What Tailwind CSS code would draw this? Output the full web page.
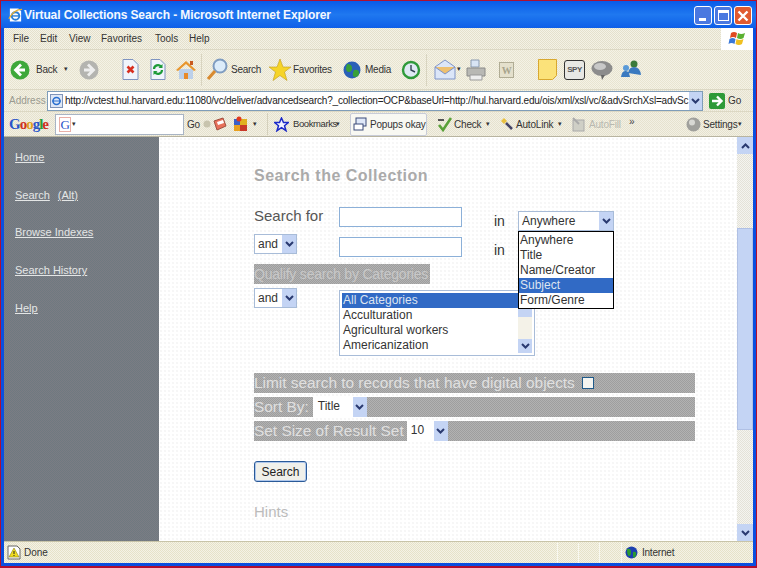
<!DOCTYPE html>
<html lang="en">
<head>
<meta charset="utf-8">
<title>Virtual Collections Search</title>
<script src="https://cdn.jsdelivr.net/npm/@tailwindcss/browser@4"></script>
</head>
<body class="w-[757px] h-[568px] overflow-hidden bg-white font-['Liberation_Sans',sans-serif]">
<div class="w-[757px] h-[568px] border border-[#b01030] border-b-2 bg-[#0a4fe0] flex flex-col">
  <!-- title bar -->
  <div class="h-[27px] flex items-center pl-[7px] pr-[4px] bg-gradient-to-b from-[#0a5ae8] via-[#1f78f0] to-[#0f5fe8]">
    <svg width="15" height="16" viewBox="0 0 16 16" class="shrink-0"><path d="M2 1h9l3 3v11H2z" fill="#fff"/><circle cx="8" cy="9" r="4" fill="none" stroke="#2a7fd8" stroke-width="2"/><path d="M3 9h10" stroke="#2a7fd8" stroke-width="1.5"/><path d="M1 12C5 4 11 2 15 2" stroke="#e8b030" stroke-width="1.5" fill="none"/></svg>
    <span class="text-[#f4f8ff] ml-[1px] font-bold text-[12px] tracking-[-0.1px] whitespace-nowrap">Virtual Collections Search - Microsoft Internet Explorer</span>
    <div class="ml-auto flex gap-[2px] mt-[2px]">
      <div class="w-[18px] h-[19px] rounded-[3px] border border-white bg-[#4a78e0] flex items-end pl-[4px] pb-[3px]"><div class="w-[7px] h-[3px] bg-white"></div></div>
      <div class="w-[18px] h-[19px] rounded-[3px] border border-white bg-[#4a78e0] flex items-center justify-center"><div class="w-[11px] h-[11px] border border-white border-t-[3px]"></div></div>
      <div class="w-[18px] h-[19px] rounded-[3px] border border-white bg-[#e05a30] flex items-center justify-center"><svg width="12" height="12" viewBox="0 0 12 12"><path d="M1.5 1.5l9 9M10.5 1.5l-9 9" stroke="#fff" stroke-width="2.4"/></svg></div>
    </div>
  </div>
  <!-- window body -->
  <div class="flex-1 min-h-0 mx-[3px] mb-[3px] flex flex-col text-[#333] bg-[#ece9d8]">
    <!-- menu -->
    <div class="h-[22px] flex items-center text-[10px] relative border-b border-[#dcd8c4] bg-[repeating-conic-gradient(#f4f2e6_0_25%,#e4e0cc_0_50%)] bg-[length:2px_2px]">
      <span class="ml-[9px] w-[27px]">File</span><span class="w-[29px]">Edit</span><span class="w-[32px]">View</span><span class="w-[54px]">Favorites</span><span class="w-[34px]">Tools</span><span>Help</span>
      <div class="ml-auto w-[32px] h-[22px] bg-white flex items-center justify-center">
        <svg width="18" height="17" viewBox="0 0 18 17"><path d="M3 3q3-2 6 0l-1 5q-3-2-6 0z" fill="#e04a20"/><path d="M10 3q3 2 7 0l-1.500 5q-3 2-6.500 0z" fill="#5ab030"/><path d="M1.500 9q3-2 6 0l-1 5q-3-2-6 0z" fill="#3a78d8"/><path d="M8.500 9q3 2 7 0l-1.500 5q-3 2-6.500 0z" fill="#f0c020"/></svg>
      </div>
    </div>
    <!-- standard toolbar -->
    <div class="h-[40px] flex items-center text-[10px] tracking-[-0.25px] border-b border-[#dcd8c4] bg-[repeating-conic-gradient(#f4f2e6_0_25%,#e8e4d0_0_50%)] bg-[length:2px_2px]">
      <svg class="ml-[6px] shrink-0" width="20" height="20" viewBox="0 0 20 20"><circle cx="10" cy="10" r="9.500" fill="#3ea83a"/><path d="M11 4.500L5.500 10l5.500 5.500M6 10h9" stroke="#fff" stroke-width="2.800" fill="none"/></svg>
      <span class="ml-[6px] w-[18px]">Back</span>
      <span class="ml-[10px] w-[6px] text-[7px]">▾</span>
      <svg class="ml-[9px] shrink-0" width="20" height="20" viewBox="0 0 20 20"><circle cx="10" cy="10" r="9.500" fill="#b4b4b0"/><path d="M9 4.500L14.500 10 9 15.500M14 10H5" stroke="#eee" stroke-width="2.800" fill="none"/></svg>
      <svg class="ml-[23px] shrink-0" width="17" height="21" viewBox="0 0 17 21"><path d="M1 .5h10l5 5v15H1z" fill="#f0f4fb" stroke="#7f94c0"/><path d="M5.500 7.500l6 6M11.500 7.500l-6 6" stroke="#d83020" stroke-width="2.600"/></svg>
      <svg class="ml-[11px] shrink-0" width="16" height="21" viewBox="0 0 16 21"><path d="M1 .5h9l5 5v15H1z" fill="#f0f4fb" stroke="#7f94c0"/><path d="M4 10a4 4 0 0 1 7-2.500M12 11a4 4 0 0 1-7 2.500" stroke="#1c9a38" stroke-width="2.200" fill="none"/><path d="M12.500 5v4h-4zM3.500 16v-4h4z" fill="#1c9a38"/></svg>
      <svg class="ml-[10px] shrink-0" width="20" height="20" viewBox="0 0 20 20"><path d="M3 9v10h14V9z" fill="#bcd0ea"/><path d="M8 13h4v6H8z" fill="#e88a2a"/><path d="M0 10L10 1l10 9-2 1-8-7-8 7z" fill="#e8962e"/><rect x="14" y="1" width="3" height="4" fill="#c85a20"/></svg>
      <div class="ml-[5px] w-px h-[32px] bg-[#d8d4c0]"></div>
      <svg class="ml-[4px] shrink-0" width="22" height="23" viewBox="0 0 22 23"><circle cx="14" cy="8" r="6.500" fill="#dcecfa" stroke="#7f9cc0" stroke-width="2"/><path d="M9 13L2 21" stroke="#d88a30" stroke-width="3.200"/></svg>
      <span class="ml-[3px] w-[28px]">Search</span>
      <svg class="ml-[10px] shrink-0" width="22" height="22" viewBox="0 0 22 22"><path d="M11 0l3 8h8l-6.500 5 2.500 8.500-7-5-7 5L6.500 13 0 8h8z" fill="#f6d428" stroke="#c09a20" stroke-width=".6"/></svg>
      <span class="ml-[2px] w-[38px]">Favorites</span>
      <svg class="ml-[12px] shrink-0" width="18" height="20" viewBox="0 0 18 20"><circle cx="9" cy="10" r="8.500" fill="#2a60b8"/><path d="M4 4q5 0 5 4t-3 4-3-4zM11 10q5-1 5 3t-4 4-1-7z" fill="#38a038"/></svg>
      <span class="ml-[4px] w-[24px]">Media</span>
      <svg class="ml-[12px] shrink-0" width="20" height="20" viewBox="0 0 20 20"><circle cx="10" cy="10" r="8" fill="#dfe9f4" stroke="#2f9a3a" stroke-width="2.400"/><path d="M10 5v5l4 2" stroke="#345" stroke-width="1.400" fill="none"/></svg>
      <div class="ml-[5px] w-px h-[32px] bg-[#d8d4c0]"></div>
      <svg class="ml-[7px] shrink-0" width="22" height="21" viewBox="0 0 22 21"><path d="M1 8l10-7 10 7v12H1z" fill="#dce6f8" stroke="#7f94c8"/><path d="M1 8l10 7 10-7" fill="#eec070" stroke="#7f94c8"/></svg>
      <span class="ml-[1px] w-[8px] text-[7px]">▾</span>
      <svg class="ml-[1px] shrink-0" width="20" height="22" viewBox="0 0 20 22"><path d="M5 1h8v7H5z" fill="#d8e4f4" stroke="#8a9ab0"/><path d="M1 9h18v8H1z" fill="#b8b8b4" stroke="#8a8a88"/><path d="M4 16h12v5H4z" fill="#eee" stroke="#999"/></svg>
      <svg class="ml-[13px] shrink-0" width="15" height="16" viewBox="0 0 15 16"><rect x=".5" y=".5" width="14" height="15" fill="#e4e0cc" stroke="#b0ac94"/><text x="7.500" y="12" font-size="10" font-weight="700" text-anchor="middle" fill="#a8a48c" font-family="Liberation Serif">W</text></svg>
      <svg class="ml-[24px] shrink-0" width="19" height="21" viewBox="0 0 19 21"><path d="M.5.500h18v16l-4 4H.5z" fill="#fbe27a" stroke="#d8a830"/></svg>
      <div class="ml-[7px] w-[21px] h-[20px] border border-[#333] bg-[#e8e8e4] rounded-[3px] flex items-center justify-center text-[8px] text-[#555] font-bold tracking-[-0.5px]">SPY</div>
      <svg class="ml-[6px] shrink-0" width="22" height="20" viewBox="0 0 22 20"><ellipse cx="11" cy="8.500" rx="10.500" ry="7.500" fill="#8c8c8c"/><ellipse cx="9" cy="6.500" rx="6" ry="3.500" fill="#c8c8c8"/><path d="M10 15l1 5 3-5z" fill="#666"/></svg>
      <svg class="ml-[8px] shrink-0" width="20" height="21" viewBox="0 0 20 21"><circle cx="5" cy="9" r="3" fill="#5a9ad8"/><circle cx="13" cy="5" r="3.500" fill="#3a7a3a"/><path d="M0 18q1-7 5-6 3 0 4 6zM7 14q1-6 6-6 6 0 7 8z" fill="#3a7ac0"/></svg>
    </div>
    <!-- address bar -->
    <div class="h-[22px] flex items-center text-[10px] border-b border-[#dcd8c4] bg-[repeating-conic-gradient(#f2f0e4_0_25%,#e6e2ce_0_50%)] bg-[length:2px_2px]">
      <span class="ml-[5px] w-[38px] text-[#9a9a90]">Address</span>
      <div class="w-[656px] h-[20px] border border-[#7f9db9] bg-white flex items-center overflow-hidden relative">
        <svg class="ml-[2px] shrink-0" width="13" height="14" viewBox="0 0 13 14"><rect x=".5" y=".5" width="12" height="13" fill="#dfe8f6" stroke="#7f94b8"/><circle cx="6.500" cy="7" r="3.500" fill="none" stroke="#2a70d0" stroke-width="1.600"/><path d="M2 7h9" stroke="#2a70d0"/></svg>
        <span class="ml-[2px] text-[#222] whitespace-nowrap tracking-[-0.2px]">http://vctest.hul.harvard.edu:11080/vc/deliver/advancedsearch?_collection=OCP&amp;baseUrl=http://hul.harvard.edu/ois/xml/xsl/vc/&amp;advSrchXsl=advSc</span>
        <div class="absolute right-0 top-0 bottom-0 w-[13px] bg-[#c4d4f4] flex items-center justify-center"><svg width="9" height="6" viewBox="0 0 9 6"><path d="M1 1l3.500 3.500L8 1" stroke="#2a3a70" stroke-width="2" fill="none"/></svg></div>
      </div>
      <svg class="ml-[6px] shrink-0" width="16" height="16" viewBox="0 0 16 16"><rect width="16" height="16" rx="2" fill="#2e9a38"/><path d="M3 8h9M8 3.500L12.500 8 8 12.500" stroke="#fff" stroke-width="2.400" fill="none"/></svg>
      <span class="ml-[3px]">Go</span>
    </div>
    <!-- google bar -->
    <div class="h-[25px] flex items-center text-[10px] tracking-[-0.2px] border-b border-[#b8b4a0] bg-[repeating-conic-gradient(#f2f0e4_0_25%,#e6e2ce_0_50%)] bg-[length:2px_2px]">
      <span class="ml-[5px] w-[43px] text-[15px] font-bold tracking-[-1px] font-['Liberation_Serif',serif] text-[#2a55c8]"><span>G</span><span class="text-[#d03020]">o</span><span class="text-[#e0a020]">o</span><span>g</span><span class="text-[#2a9a38]">l</span><span class="text-[#d03020]">e</span></span>
      <div class="ml-[3px] w-[129px] h-[21px] border border-[#a8b4c4] bg-white flex items-center pl-[3px]">
        <span class="w-[12px] h-[15px] border border-[#e8b0a8] font-['Liberation_Serif',serif] text-[13px] leading-[14px] text-[#2a55c8] text-center">G</span><span class="text-[7px] ml-[1px]">▾</span>
      </div>
      <span class="ml-[3px] w-[11px]">Go</span>
      <svg class="ml-[5px] shrink-0" width="8" height="8" viewBox="0 0 8 8"><circle cx="4" cy="4" r="3.500" fill="#c8c4ae"/></svg>
      <svg class="ml-[2px] shrink-0" width="14" height="14" viewBox="0 0 14 14"><path d="M1 4l9-3 3 8-9 4z" fill="#e8705a" stroke="#a05040"/><path d="M4 5l6-2 1 3-6 2z" fill="#fff"/></svg>
      <svg class="ml-[6px] shrink-0" width="15" height="16" viewBox="0 0 15 16"><rect x="1" y="3" width="6" height="6" fill="#3a60c8"/><rect x="7" y="3" width="7" height="6" fill="#e0b020"/><rect x="1" y="9" width="6" height="6" fill="#e8a020"/><rect x="7" y="9" width="7" height="6" fill="#c83828"/><circle cx="6" cy="3" r="2.500" fill="#e03a20"/></svg>
      <span class="ml-[5px] w-[14px] text-[7px]">▾</span>
      <div class="w-px h-[22px] bg-[#d4d0bc]"></div>
      <svg class="ml-[6px] shrink-0" width="15" height="15" viewBox="0 0 15 15"><path d="M7.500 1l2 4.500h5l-4 3.200 1.500 5-4.500-3-4.500 3 1.500-5-4-3.200h5z" fill="#f4f4ff" stroke="#1c2ac8" stroke-width="1.500"/></svg>
      <span class="ml-[4px] w-[43px] text-[9.5px] tracking-[-0.4px] whitespace-nowrap">Bookmarks</span><span class="w-[14px] text-[7px]">▾</span>
      <div class="w-[77px] h-[23px] bg-[#f8f8f2] border border-[#c8ccd8] rounded-[2px] flex items-center pl-[2px]">
        <svg class="shrink-0" width="15" height="15" viewBox="0 0 15 15"><rect x="3" y="1" width="10" height="8" fill="#dfe8f8" stroke="#3a4a78"/><rect x="1" y="7" width="9" height="6" fill="#fff" stroke="#3a4a78"/></svg>
        <span class="ml-[2px] whitespace-nowrap">Popups okay</span>
      </div>
      <svg class="ml-[10px] shrink-0" width="15" height="15" viewBox="0 0 15 15"><path d="M2 8l4 5 8-12" stroke="#5aa038" stroke-width="2.600" fill="none"/><path d="M1 3h6" stroke="#555" stroke-width="2"/></svg>
      <span class="ml-[2px] w-[32px]">Check</span><span class="w-[14px] text-[7px]">▾</span>
      <svg class="shrink-0" width="14" height="14" viewBox="0 0 14 14"><path d="M1 4l3-3 3 3-3 3z" fill="#e8c040"/><path d="M6 6l6 6" stroke="#446" stroke-width="2.600"/></svg>
      <span class="ml-[2px] w-[42px]">AutoLink</span><span class="w-[14px] text-[7px]">▾</span>
      <svg class="shrink-0" width="14" height="15" viewBox="0 0 14 15"><rect x="1" y="3" width="11" height="11" fill="#cfcfc6" stroke="#aaa"/><path d="M1 1l6 6" stroke="#aaa" stroke-width="2"/></svg>
      <span class="ml-[3px] w-[40px] text-[#b8b8b0]">AutoFill</span>
      <span class="w-[57px] -mt-[6px] text-[#444]">»</span>
      <svg class="shrink-0" width="15" height="15" viewBox="0 0 15 15"><circle cx="7.500" cy="7.500" r="7" fill="#a0a09c"/><circle cx="6" cy="5.500" r="3" fill="#d8d8d4"/></svg>
      <span class="ml-[2px]">Settings</span><span class="text-[7px]">▾</span>
    </div>
    <!-- page area -->
    <div class="flex-1 min-h-0 flex bg-white overflow-hidden">
      <nav class="w-[155px] shrink-0 pl-[11px] pt-[13px] text-[11px] leading-[14px] text-[#e4e6e6] underline bg-[repeating-conic-gradient(#6e7a80_0_25%,#7c7c84_0_50%)] bg-[length:2px_2px]">
        <a class="block h-[38px]">Home</a>
        <div class="h-[37px] flex gap-[8px]"><a>Search</a><a>(Alt)</a></div>
        <a class="block h-[38px]">Browse Indexes</a>
        <a class="block h-[38px]">Search History</a>
        <a class="block">Help</a>
      </nav>
      <main class="flex-1 pl-[95px] pt-[29px] text-[13px] text-[#333] bg-[radial-gradient(#e4e4e4_0.5px,transparent_0.8px)] bg-[length:4px_4px]">
        <h1 class="h-[20px] mb-[21px] text-[16px] leading-[20px] tracking-[0.5px] font-bold text-[#aaaaaa]">Search the Collection</h1>
        <div class="h-[27px] flex">
          <span class="w-[85px] text-[15px] leading-[18px] text-[#555]">Search for</span>
          <div class="w-[123px] h-[20px] border border-[#8cb0d8] bg-white"></div>
          <span class="ml-[32px] w-[24px] mt-[4px] text-[14px]">in</span>
          <div class="relative mt-[4px] w-[96px] h-[20px] border border-[#a8bcd8] bg-white flex items-center pl-[3px] text-[12px]">
            <span>Anywhere</span>
            <div class="absolute right-0 top-0 bottom-0 w-[14px] bg-[#c4d4f4] flex items-center justify-center"><svg width="9" height="6" viewBox="0 0 9 6"><path d="M1 1l3.500 3.500L8 1" stroke="#2a3a70" stroke-width="2" fill="none"/></svg></div>
            <ul class="absolute left-[-1px] top-[19px] w-[96px] h-[78px] pt-[1px] z-10 border border-black bg-white text-[12px] leading-[15px] text-[#333]">
              <li class="px-[1px]">Anywhere</li>
              <li class="px-[1px]">Title</li>
              <li class="px-[1px]">Name/Creator</li>
              <li class="px-[1px] bg-[#316ac5] text-[#dde4f0]">Subject</li>
              <li class="px-[1px]">Form/Genre</li>
            </ul>
          </div>
        </div>
        <div class="h-[30px] flex">
          <div class="relative w-[43px] h-[20px] border border-[#a8bcd8] bg-white pl-[3px] text-[12px] leading-[18px]">and<div class="absolute right-0 top-0 bottom-0 w-[14px] bg-[#c4d4f4] flex items-center justify-center"><svg width="9" height="6" viewBox="0 0 9 6"><path d="M1 1l3.500 3.500L8 1" stroke="#2a3a70" stroke-width="2" fill="none"/></svg></div></div>
          <div class="ml-[42px] mt-[3px] w-[123px] h-[20px] border border-[#8cb0d8] bg-white"></div>
          <span class="ml-[32px] mt-[6px] text-[14px]">in</span>
        </div>
        <div class="w-[176px] h-[20px] mb-[4px] text-[14px] tracking-[-0.2px] leading-[20px] whitespace-nowrap text-[#c8c8c8] bg-[repeating-conic-gradient(#9e9e9e_0_25%,#b2b2b2_0_50%)] bg-[length:2px_2px]">Qualify search by Categories</div>
        <div class="h-[68px] flex">
          <div class="relative w-[43px] h-[20px] border border-[#a8bcd8] bg-white pl-[3px] text-[12px] leading-[18px]">and<div class="absolute right-0 top-0 bottom-0 w-[14px] bg-[#c4d4f4] flex items-center justify-center"><svg width="9" height="6" viewBox="0 0 9 6"><path d="M1 1l3.500 3.500L8 1" stroke="#2a3a70" stroke-width="2" fill="none"/></svg></div></div>
          <div class="ml-[42px] mt-[2px] w-[196px] h-[66px] border border-[#a8bcd8] bg-white p-[2px] flex text-[12px] leading-[15px]">
            <ul class="flex-1 overflow-hidden">
              <li class="bg-[#316ac5] text-[#dde4f0] pl-[1px]">All Categories</li>
              <li class="pl-[1px]">Acculturation</li>
              <li class="pl-[1px]">Agricultural workers</li>
              <li class="pl-[1px]">Americanization</li>
            </ul>
            <div class="w-[14px] flex flex-col justify-between bg-[#f4f2e8]">
              <div class="h-[24px] bg-[#c4d4f4]"></div>
              <div class="h-[14px] bg-[#c4d4f4] flex items-center justify-center"><svg width="9" height="6" viewBox="0 0 9 6"><path d="M1 1l3.500 3.500L8 1" stroke="#2a3a70" stroke-width="2" fill="none"/></svg></div>
            </div>
          </div>
        </div>
        <div class="mt-[17px] w-[441px] flex flex-col gap-[4px] text-[15.4px] text-[#e0e0e0]">
          <div class="h-[20px] bg-[repeating-conic-gradient(#9e9e9e_0_25%,#b2b2b2_0_50%)] bg-[length:2px_2px] flex items-center whitespace-nowrap">Limit search to records that have digital objects<span class="ml-[7px] w-[12px] h-[12px] border border-[#1f5a8a] bg-[#f4f4f0]"></span></div>
          <div class="h-[20px] bg-[repeating-conic-gradient(#9e9e9e_0_25%,#b2b2b2_0_50%)] bg-[length:2px_2px] flex items-center whitespace-nowrap">Sort By:<div class="relative ml-[4px] w-[54px] h-[20px] bg-white pl-[5px] text-[12px] leading-[19px] text-[#333]">Title<div class="absolute right-0 top-0 bottom-0 w-[14px] bg-[#c4d4f4] flex items-center justify-center"><svg width="9" height="6" viewBox="0 0 9 6"><path d="M1 1l3.500 3.500L8 1" stroke="#2a3a70" stroke-width="2" fill="none"/></svg></div></div></div>
          <div class="h-[20px] bg-[repeating-conic-gradient(#9e9e9e_0_25%,#b2b2b2_0_50%)] bg-[length:2px_2px] flex items-center whitespace-nowrap">Set Size of Result Set<div class="relative ml-[3px] w-[41px] h-[20px] bg-white pl-[4px] text-[12px] leading-[19px] text-[#333]">10<div class="absolute right-0 top-0 bottom-0 w-[14px] bg-[#c4d4f4] flex items-center justify-center"><svg width="9" height="6" viewBox="0 0 9 6"><path d="M1 1l3.500 3.500L8 1" stroke="#2a3a70" stroke-width="2" fill="none"/></svg></div></div></div>
        </div>
        <button class="block mt-[20px] w-[53px] h-[21px] border border-[#2a5a98] rounded-[3px] bg-[#f0f0ea] shadow-[inset_0_0_0_1px_#b0c8ec] text-[12px] text-[#222]">Search</button>
        <p class="mt-[20px] text-[15px] leading-[20px] text-[#bbbbbb]">Hints</p>
      </main>
      <!-- scrollbar -->
      <div class="w-[16px] shrink-0 flex flex-col bg-[repeating-conic-gradient(#f4f4f0_0_25%,#e4e2d8_0_50%)] bg-[length:2px_2px]">
        <div class="h-[17px] bg-[#c4d4f4] flex items-center justify-center"><svg width="9" height="6" viewBox="0 0 9 6"><path d="M1 5l3.500-3.500L8 5" stroke="#2a3a70" stroke-width="2" fill="none"/></svg></div>
        <div class="mt-[74px] h-[202px] bg-[#c4d4f4] border border-[#b0c0e4]"></div>
        <div class="mt-auto h-[17px] bg-[#c4d4f4] flex items-center justify-center"><svg width="9" height="6" viewBox="0 0 9 6"><path d="M1 1l3.500 3.500L8 1" stroke="#2a3a70" stroke-width="2" fill="none"/></svg></div>
      </div>
    </div>
    <!-- status bar -->
    <div class="h-[22px] flex items-center text-[10px] border-t border-[#c8c4a8] bg-[repeating-conic-gradient(#f4f2e6_0_25%,#e6e2c8_0_50%)] bg-[length:2px_2px]">
      <svg class="ml-[3px] shrink-0" width="14" height="15" viewBox="0 0 14 15"><path d="M1 1h9l3 3v10H1z" fill="#fff" stroke="#666"/><path d="M7 3l5 9H2z" fill="#f0dc20" stroke="#88801a" stroke-width=".6"/><path d="M7 6v3M7 10v1" stroke="#222"/></svg>
      <span class="ml-[3px]">Done</span>
      <div class="ml-[509px] w-[21px] h-[20px] border-l border-[#f8f8f0]"></div>
      <div class="w-[21px] h-[20px] border-l border-[#f8f8f0]"></div>
      <div class="w-[22px] h-[20px] border-l border-[#f8f8f0]"></div>
      <div class="w-[4px] h-[20px] border-l border-[#f8f8f0]"></div>
      <svg class="shrink-0" width="13" height="13" viewBox="0 0 13 13"><circle cx="6.500" cy="6.500" r="6" fill="#1c3fb0"/><path d="M2 3q4-1 4 3t-2 4-2-7zM8 6q4-1 3 3t-3 2z" fill="#2a9a30"/></svg>
      <span class="ml-[4px] tracking-[-0.2px]">Internet</span>
    </div>
  </div>
</div>
</body>
</html>
